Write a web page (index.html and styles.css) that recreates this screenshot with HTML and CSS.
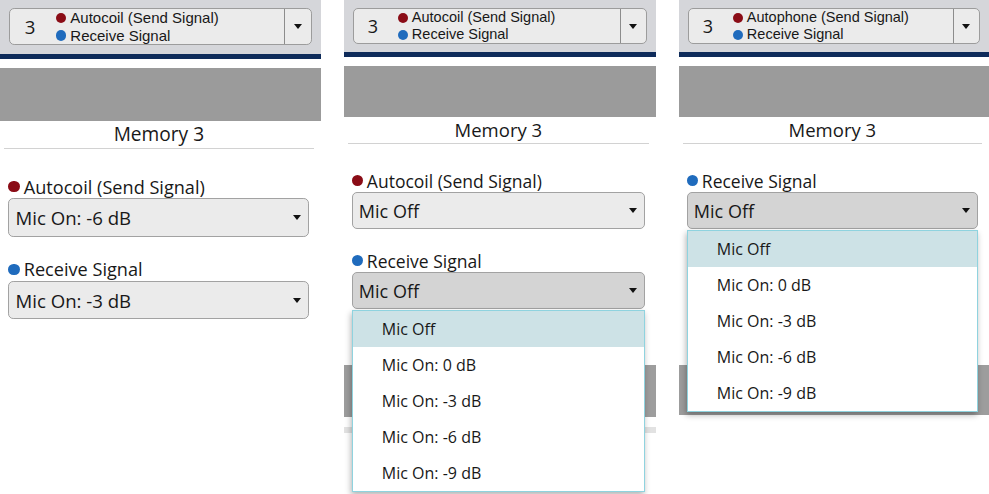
FILE: index.html
```html
<!DOCTYPE html>
<html lang="en">
<head>
    <meta charset="UTF-8">
    <meta name="viewport" content="width=device-width, initial-scale=1.0">
    <title>Memory 3 Settings</title>
    <link rel="stylesheet" href="styles.css">
</head>
<body>
    <div class="board">

        <!-- Panel 1: both closed -->
        <section class="panel panel-large">
            <header class="memory-bar">
                <div class="memory-select">
                    <span class="memory-num">3</span>
                    <span class="memory-lines">
                        <span class="memory-line"><i class="dot dot-send"></i>Autocoil (Send Signal)</span>
                        <span class="memory-line"><i class="dot dot-receive"></i>Receive Signal</span>
                    </span>
                    <span class="memory-arrow"><i class="caret"></i></span>
                </div>
            </header>
            <div class="banner"></div>
            <h2 class="memory-title">Memory 3</h2>
            <div class="fields">
                <div class="field">
                    <div class="field-label"><i class="dot dot-send"></i>Autocoil (Send Signal)</div>
                    <div class="combo"><span>Mic On: -6 dB</span><i class="caret"></i></div>
                </div>
                <div class="field">
                    <div class="field-label"><i class="dot dot-receive"></i>Receive Signal</div>
                    <div class="combo"><span>Mic On: -3 dB</span><i class="caret"></i></div>
                </div>
            </div>
        </section>

        <!-- Panel 2: receive list open -->
        <section class="panel panel-wide">
            <header class="memory-bar">
                <div class="memory-select">
                    <span class="memory-num">3</span>
                    <span class="memory-lines">
                        <span class="memory-line"><i class="dot dot-send"></i>Autocoil (Send Signal)</span>
                        <span class="memory-line"><i class="dot dot-receive"></i>Receive Signal</span>
                    </span>
                    <span class="memory-arrow"><i class="caret"></i></span>
                </div>
            </header>
            <div class="banner"></div>
            <h2 class="memory-title">Memory 3</h2>
            <div class="fields">
                <div class="field">
                    <div class="field-label"><i class="dot dot-send"></i>Autocoil (Send Signal)</div>
                    <div class="combo"><span>Mic Off</span><i class="caret"></i></div>
                </div>
                <div class="field">
                    <div class="field-label"><i class="dot dot-receive"></i>Receive Signal</div>
                    <div class="combo open"><span>Mic Off</span><i class="caret"></i></div>
                    <ul class="options">
                        <li class="selected">Mic Off</li>
                        <li>Mic On: 0 dB</li>
                        <li>Mic On: -3 dB</li>
                        <li>Mic On: -6 dB</li>
                        <li>Mic On: -9 dB</li>
                    </ul>
                </div>
            </div>
            <div class="ghost-bar ghost-mid"></div>
            <div class="ghost-line"></div>
        </section>

        <!-- Panel 3: autophone, receive only -->
        <section class="panel">
            <header class="memory-bar">
                <div class="memory-select">
                    <span class="memory-num">3</span>
                    <span class="memory-lines">
                        <span class="memory-line"><i class="dot dot-send"></i>Autophone (Send Signal)</span>
                        <span class="memory-line"><i class="dot dot-receive"></i>Receive Signal</span>
                    </span>
                    <span class="memory-arrow"><i class="caret"></i></span>
                </div>
            </header>
            <div class="banner"></div>
            <h2 class="memory-title">Memory 3</h2>
            <div class="fields">
                <div class="field">
                    <div class="field-label"><i class="dot dot-receive"></i>Receive Signal</div>
                    <div class="combo open"><span>Mic Off</span><i class="caret"></i></div>
                    <ul class="options">
                        <li class="selected">Mic Off</li>
                        <li>Mic On: 0 dB</li>
                        <li>Mic On: -3 dB</li>
                        <li>Mic On: -6 dB</li>
                        <li>Mic On: -9 dB</li>
                    </ul>
                </div>
            </div>
            <div class="ghost-bar ghost-last"></div>
        </section>

    </div>
</body>
</html>
```

FILE: styles.css
```css
html, body {
    height: 100%;
}

body {
    margin: 0;
    background: #fff;
    color: #181818;
    font-family: 'Open Sans', 'Noto Sans', sans-serif;
}

.board {
    display: flex;
    align-items: flex-start;
    gap: 23px;
    min-height: 494px;
}

.panel {
    width: 310px;
    flex: none;
}

.panel-wide {
    width: 312px;
}

/* first screenshot was taken a bit larger */
.panel-large {
    zoom: 1.035;
}

/* Memory picker bar */
.memory-bar {
    background: #d5d6da;
    padding: 8px 9px 8px 9px;
    border-bottom: 5px solid #0e2b5a;
}

.memory-select {
    display: flex;
    align-items: center;
    height: 34px;
    background: #ebebeb;
    border: 1px solid #9c9c9c;
    border-radius: 5px;
}

.memory-num {
    width: 44px;
    padding-left: 14px;
    font-size: 18px;
    box-sizing: border-box;
}

.memory-lines {
    flex: 1;
    display: flex;
    flex-direction: column;
    font-family: 'Liberation Sans', Arial, sans-serif;
    font-size: 14.5px;
    line-height: 17px;
}

.memory-line {
    display: flex;
    align-items: center;
    height: 17px;
}

.memory-arrow {
    width: 25px;
    align-self: stretch;
    border-left: 1px solid #8c8c8c;
    display: flex;
    align-items: center;
    justify-content: center;
}

.dot {
    width: 10px;
    height: 10px;
    border-radius: 50%;
    margin-right: 4px;
    flex: none;
}

.dot-send {
    background: #8a0c16;
}

.dot-receive {
    background: #1f6bbd;
}

.caret {
    width: 0;
    height: 0;
    border-left: 4.5px solid transparent;
    border-right: 4.5px solid transparent;
    border-top: 5px solid #111;
}

.banner {
    height: 51px;
    margin-top: 9px;
    background: #9b9b9b;
}

.memory-title {
    margin: 0 7px 0 4px;
    height: 26px;
    line-height: 26px;
    font-size: 18.5px;
    font-weight: normal;
    text-align: center;
    border-bottom: 1px solid #d2d2d2;
}

/* Fields */
.fields {
    padding: 26px 11px 0 8px;
    display: flex;
    flex-direction: column;
    gap: 21px;
}

.field {
    position: relative;
}

.field-label {
    display: flex;
    align-items: center;
    height: 21px;
    margin-bottom: 1px;
    font-size: 17.5px;
}

.field-label .dot {
    width: 11px;
    height: 11px;
}

.combo {
    display: flex;
    align-items: center;
    justify-content: space-between;
    height: 35px;
    padding: 0 7px 0 6px;
    background: #ebebeb;
    border: 1px solid #a2a2a2;
    border-radius: 5px;
    font-size: 18px;
}

.combo.open {
    background: #d4d4d4;
}

.options {
    position: absolute;
    top: 100%;
    left: 0;
    right: 0;
    margin: 1px 0 0;
    padding: 0;
    list-style: none;
    background: #fff;
    border: 1px solid #8fd3df;
    box-shadow: -1px 3px 6px rgba(0, 0, 0, 0.3);
    z-index: 2;
}

.options li {
    height: 36px;
    line-height: 36px;
    padding-left: 29px;
    font-size: 16px;
}

.options li.selected {
    background: #cde2e6;
}

/* bits of the page that show behind the open list */
.ghost-bar {
    height: 52px;
    background: #9d9d9d;
}

.ghost-mid {
    margin-top: 56px;
}

.ghost-last {
    margin-top: 136px;
    height: 50px;
}

.ghost-line {
    height: 6px;
    margin-top: 10px;
    background: #e2e2e2;
}
```
